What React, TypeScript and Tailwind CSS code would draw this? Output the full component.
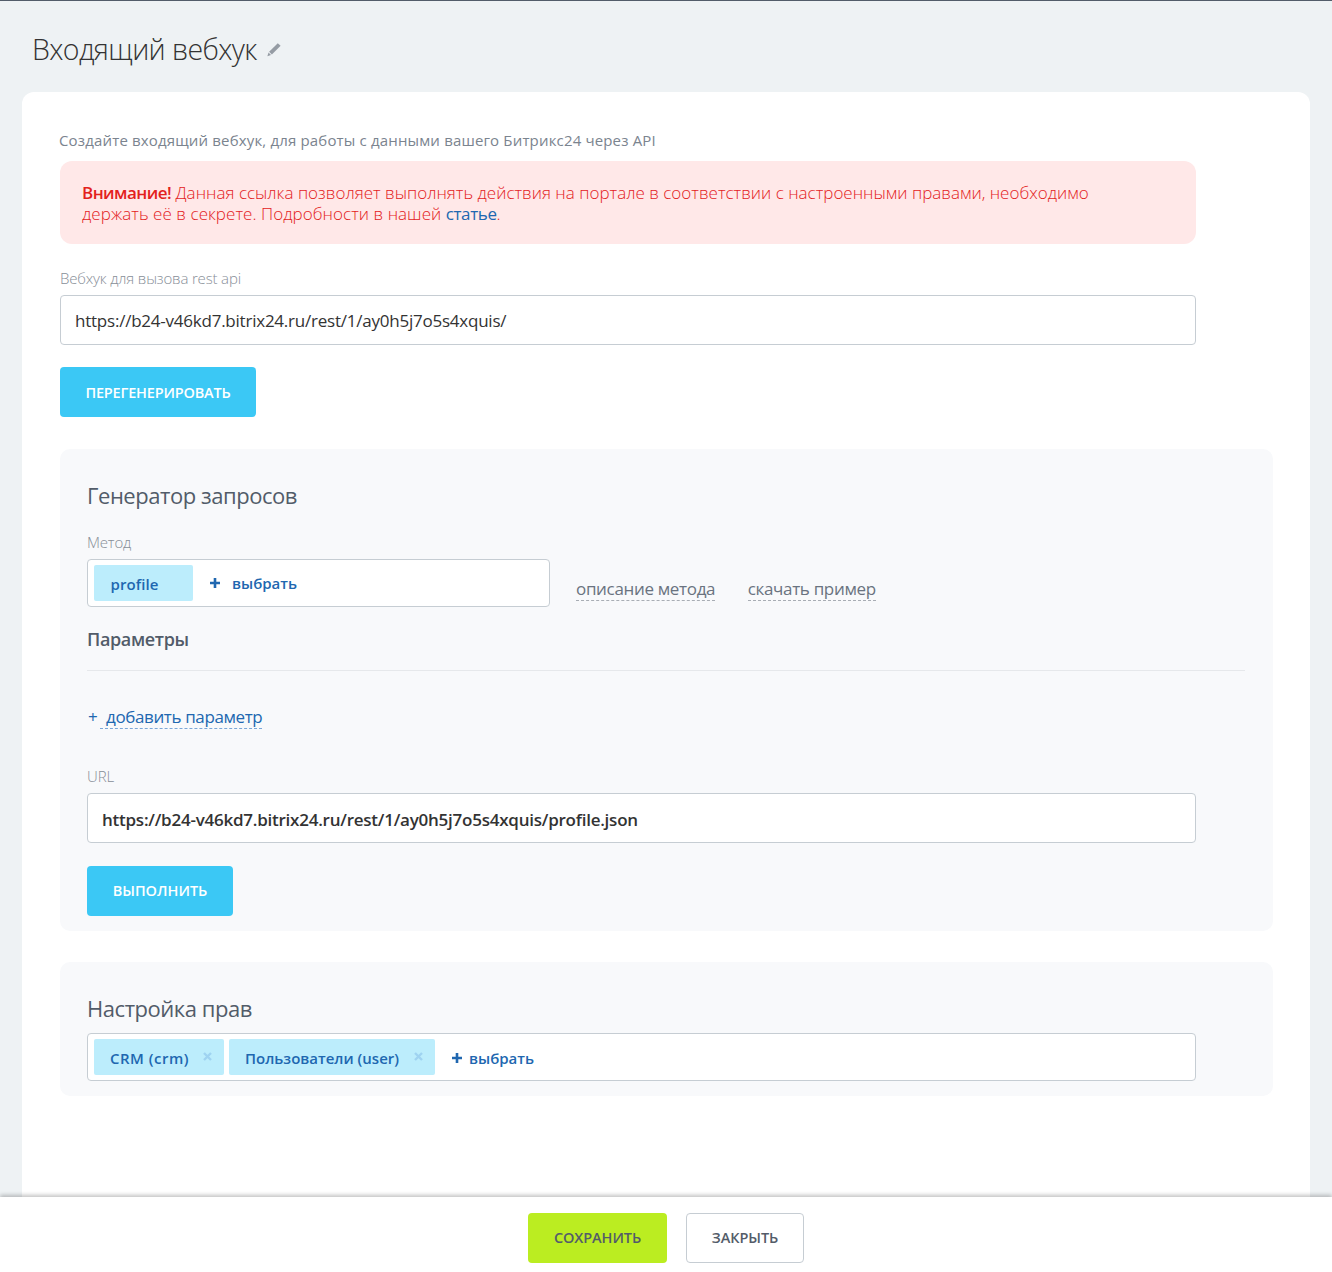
import type { ReactNode } from 'react';

function Plus() {
  return (
    <svg width="10" height="10" viewBox="0 0 10 10" className="shrink-0" aria-hidden="true">
      <path d="M0 5h10M5 0v10" stroke="#2067b0" strokeWidth="2.6" />
    </svg>
  );
}

function Cross({ className }: { className: string }) {
  return (
    <svg width="9" height="9" viewBox="0 0 9 9" className={`shrink-0 ${className}`} aria-hidden="true">
      <path d="M1 1l7 7M8 1l-7 7" stroke="#9fd3f1" strokeWidth="2.4" />
    </svg>
  );
}

function Label({ children }: { children: ReactNode }) {
  return <div className="h-5 text-[15px] leading-5 font-light tracking-[-0.16px] text-[#878e97]">{children}</div>;
}

function BlueButton({ children, className }: { children: ReactNode; className: string }) {
  return (
    <button
      className={`flex h-[50px] items-center justify-center rounded-[4px] bg-[#3bc8f5] text-[14.5px] leading-5 font-semibold text-white ${className}`}
    >
      {children}
    </button>
  );
}

export default function App() {
  return (
    <div className="flex h-[1272px] w-[1332px] flex-col overflow-hidden border-t border-[#525c69] bg-[#eef2f4] font-['Open_Sans','Noto_Sans',sans-serif]">
      <header className="flex h-[91px] shrink-0 items-start pt-[28px] pl-8">
        <h1 className="w-[235px] text-[28.5px] leading-[40px] font-light tracking-[-0.62px] whitespace-nowrap text-[#333]">
          Входящий вебхук
        </h1>
        <svg width="14" height="14" viewBox="0 0 14 14" className="mt-[14px]" fill="#959ca4" aria-hidden="true">
          <path d="M10.8 0.2 L13.6 2.8 L4.9 11.4 L2.1 8.7 Z" />
          <path d="M1.5 9.6 L4 12 L0.4 13.2 Z" />
        </svg>
      </header>

      <main className="mx-[22px] min-h-0 flex-1 overflow-hidden rounded-t-xl bg-white pt-[38px] pr-[37px] pl-[38px]">
        <p className="-ml-px h-5 text-[15px] leading-5 tracking-[0.16px] whitespace-nowrap text-[#7b848f]">
          Создайте входящий вебхук, для работы с данными вашего Битрикс24 через API
        </p>

        <div className="mt-[11px] h-[83px] w-[1136px] rounded-xl bg-[#ffe8e8] pt-[21px] pl-[22px] text-[17px] leading-[21px] font-light whitespace-nowrap text-[#e3211c]">
          <span className="font-semibold tracking-[-0.55px]">Внимание!</span>{' '}
          <span className="tracking-[0.01px]">
            Данная ссылка позволяет выполнять действия на портале в соответствии с настроенными правами, необходимо
          </span>
          <br />
          <span className="tracking-[0.05px]">держать её в секрете. Подробности в нашей </span>
          <a className="font-normal tracking-[-0.4px] text-[#2067b0]">статье</a>.
        </div>

        <div className="mt-[24px]">
          <Label>Вебхук для вызова rest api</Label>
        </div>
        <div className="mt-[7px] flex h-[50px] w-[1136px] items-center rounded-[4px] border border-[#c6cdd3] bg-white pt-[2px] pl-[14px] text-[17px] tracking-[-0.23px] text-[#333]">
          https://b24-v46kd7.bitrix24.ru/rest/1/ay0h5j7o5s4xquis/
        </div>
        <BlueButton className="mt-[22px] w-[196px] pt-px tracking-[-0.18px]">ПЕРЕГЕНЕРИРОВАТЬ</BlueButton>

        <section className="mt-8 h-[482px] rounded-[10px] bg-[#f8f9fb] pt-[31px] pr-[28px] pl-[27px]">
          <h2 className="h-[30px] text-[22px] leading-[30px] tracking-[-0.45px] text-[#525c69]">Генератор запросов</h2>
          <div className="mt-[22px]">
            <Label>Метод</Label>
          </div>
          <div className="mt-[7px] flex h-12">
            <div className="flex h-12 w-[463px] items-center rounded-[4px] border border-[#c6cdd3] bg-white pl-[6px] text-[15px] font-semibold text-[#2067b0]">
              <span className="flex h-9 w-[99px] items-center rounded-[2px] bg-[#bcedfc] pt-[2px] pl-[16.5px] tracking-[0.08px]">
                profile
              </span>
              <span className="ml-[17px] flex items-center gap-[12px]">
                <Plus />
                выбрать
              </span>
            </div>
            <div className="ml-[26px] flex items-start gap-[32.5px] pt-[18px] text-[17px] leading-[23px] tracking-[-0.33px] text-[#6a7380]">
              <a className="border-b border-dashed border-[#a8adb4]">описание метода</a>
              <a className="border-b border-dashed border-[#a8adb4]">скачать пример</a>
            </div>
          </div>
          <h3 className="mt-5 h-6 text-[18px] leading-6 font-semibold tracking-[-0.36px] text-[#525c69]">Параметры</h3>
          <div className="mt-[19px] h-px bg-[#e6e8eb]" />
          <div className="mt-[34px] flex h-6 items-start text-[17px] leading-[23px] tracking-[-0.38px] text-[#2067b0]">
            <span className="w-[13px] pl-px">+</span>
            <a className="border-b border-dashed border-[#7aa7d8] pl-[6px]">добавить параметр</a>
          </div>
          <div className="mt-[37px]">
            <Label>URL</Label>
          </div>
          <div className="mt-[7px] flex h-[50px] w-[1109px] items-center rounded-[4px] border border-[#c6cdd3] bg-white pt-[3px] pl-[14px] text-[17px] font-semibold tracking-[-0.24px] text-[#333]">
            https://b24-v46kd7.bitrix24.ru/rest/1/ay0h5j7o5s4xquis/profile.json
          </div>
          <BlueButton className="mt-[23px] w-[146px]">ВЫПОЛНИТЬ</BlueButton>
        </section>

        <section className="mt-[31px] h-[134px] rounded-[10px] bg-[#f8f9fb] pt-[31px] pl-[27px]">
          <h2 className="h-[30px] text-[22px] leading-[30px] tracking-[-0.45px] text-[#525c69]">Настройка прав</h2>
          <div className="mt-[10px] flex h-12 w-[1109px] items-center rounded-[4px] border border-[#c6cdd3] bg-white pl-[6px] text-[15px] font-semibold text-[#2067b0]">
            <span className="flex h-9 w-[130px] items-center justify-between rounded-[2px] bg-[#bcedfc] pr-3 pl-4">
              <span className="pt-[2px] tracking-[0.49px]">CRM (crm)</span>
              <Cross className="-mt-px" />
            </span>
            <span className="ml-[5px] flex h-9 w-[206px] items-center justify-between rounded-[2px] bg-[#bcedfc] pr-3 pl-4">
              <span className="pt-[2px]">Пользователи (user)</span>
              <Cross className="-mt-px" />
            </span>
            <span className="ml-[17px] flex items-center gap-[7px] pt-[2px]">
              <Plus />
              выбрать
            </span>
          </div>
        </section>
      </main>

      <footer className="relative flex h-[75px] shrink-0 justify-center gap-[19px] bg-white pt-4 shadow-[0_-2px_4px_rgba(0,0,0,0.24)]">
        <button className="flex h-[50px] w-[139px] items-center justify-center rounded-[4px] bg-[#bbed21] text-[14.5px] leading-5 font-semibold tracking-[-0.08px] text-[#535c69]">
          СОХРАНИТЬ
        </button>
        <button className="flex h-[50px] w-[118px] items-center justify-center rounded-[4px] border border-[#c6cdd3] bg-white text-[14.5px] leading-5 font-semibold tracking-[-0.08px] text-[#535c69]">
          ЗАКРЫТЬ
        </button>
      </footer>
    </div>
  );
}
